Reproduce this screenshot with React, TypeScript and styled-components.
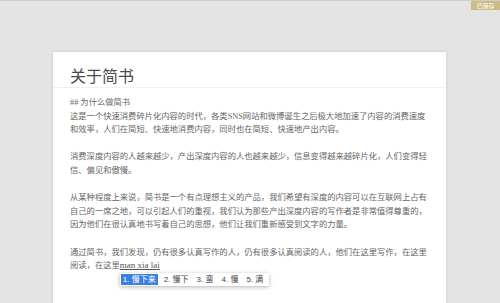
import React from "react";
import styled, { createGlobalStyle } from "styled-components";

const Global = createGlobalStyle`
  html, body { margin: 0; padding: 0; }
  body {
    background: #e4e4e4;
    width: 500px;
    height: 303px;
    overflow: hidden;
    font-family: "Liberation Serif", "Noto Sans CJK SC", serif;
  }
`;

const Page = styled.div`
  position: relative;
  width: 500px;
  height: 303px;
  border-top: 1px solid #cdcdcd;
  box-sizing: border-box;
  padding-top: 51px;
  overflow: hidden;
`;

const SavedBadge = styled.div`
  position: absolute;
  top: 0;
  right: 0;
  width: 29px;
  height: 9px;
  background: #cbbd84;
  color: #fff;
  font-family: "Noto Sans CJK SC", sans-serif;
  font-size: 6px;
  line-height: 9px;
  text-align: center;
`;

const Card = styled.div`
  margin-left: 53px;
  width: 393px;
  min-height: 260px;
  background: #fff;
  box-shadow: 0 0 3px rgba(0, 0, 0, 0.14);
`;

const TitleBar = styled.div`
  padding: 15px 17px 0;
  height: 36px;
  box-sizing: border-box;
  border-bottom: 1px solid #f0f0f0;
`;

const Title = styled.h1`
  margin: 0;
  font-family: "Liberation Serif", "Noto Sans CJK SC", serif;
  font-weight: 400;
  font-size: 16px;
  line-height: 20px;
  color: #4a4a4a;
`;

const Body = styled.div`
  padding: 8px 17px 0;
  font-size: 8.3px;
  line-height: 13.6px;
  color: #666;
  white-space: nowrap;
`;

const Para = styled.p`
  margin: 0 0 13.6px;
`;

const Composing = styled.span`
  position: relative;
  text-decoration: underline;
  text-underline-offset: 1px;
  font-size: 9px;
  color: #555;
`;

const Candidates = styled.div`
  position: absolute;
  top: 13px;
  left: 0;
  display: flex;
  align-items: center;
  gap: 4px;
  padding: 1px 4px 1px 1px;
  background: #fff;
  box-shadow: 0 1px 4px rgba(0, 0, 0, 0.3);
  font-family: "Liberation Sans", "Noto Sans CJK SC", sans-serif;
  font-size: 8px;
  line-height: 11px;
  color: #333;
  white-space: nowrap;
`;

const Candidate = styled.span<{ $active?: boolean }>`
  padding: 0 2px;
  background: ${(p) => (p.$active ? "#3a7fe0" : "transparent")};
  color: ${(p) => (p.$active ? "#fff" : "#444")};
`;

const candidates = ["慢下来", "慢下", "蛮", "慢", "满"];

export default function App() {
  return (
    <>
      <Global />
      <Page>
        <SavedBadge>已保存</SavedBadge>
        <Card>
          <TitleBar>
            <Title>关于简书</Title>
          </TitleBar>
          <Body>
            <Para>
              ## 为什么做简书
              <br />
              这是一个快速消费碎片化内容的时代，各类SNS网站和微博诞生之后极大地加速了内容的消费速度
              <br />
              和效率，人们在简短、快速地消费内容，同时也在简短、快速地产出内容。
            </Para>
            <Para>
              消费深度内容的人越来越少，产出深度内容的人也越来越少，信息变得越来越碎片化，人们变得轻
              <br />
              信、偏见和傲慢。
            </Para>
            <Para>
              从某种程度上来说，简书是一个有点理想主义的产品，我们希望有深度的内容可以在互联网上占有
              <br />
              自己的一席之地，可以引起人们的重视，我们认为那些产出深度内容的写作者是非常值得尊重的，
              <br />
              因为他们在很认真地书写着自己的思想，他们让我们重新感受到文字的力量。
            </Para>
            <Para>
              通过简书，我们发现，仍有很多认真写作的人，仍有很多认真阅读的人，他们在这里写作，在这里
              <br />
              阅读，在这里
              <Composing>
                man xia lai
                <Candidates>
                  {candidates.map((c, i) => (
                    <Candidate key={c} $active={i === 0}>
                      {i + 1}. {c}
                    </Candidate>
                  ))}
                </Candidates>
              </Composing>
            </Para>
          </Body>
        </Card>
      </Page>
    </>
  );
}
